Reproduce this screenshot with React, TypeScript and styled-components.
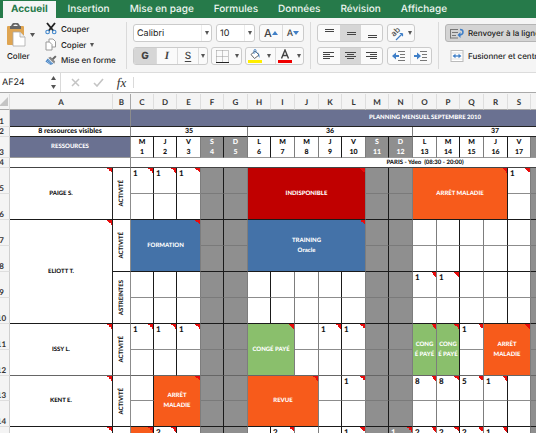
import React from 'react';
import styled, { createGlobalStyle, css } from 'styled-components';

const GlobalStyle = createGlobalStyle`
  *, *::before, *::after { box-sizing: border-box; }
  body { margin: 0; background: #fff; text-rendering: geometricPrecision; }
  button, input, select { font: inherit; color: inherit; margin: 0; padding: 0; border: 0; background: none; text-rendering: inherit; }
`;

const UI_FONT = 'Inter, "Liberation Sans", sans-serif';
const SHEET_FONT = 'Lato, "Open Sans", sans-serif';

const colors = {
  green: '#267a4a',
  ribbon: '#f5f5f5',
  slate: '#6a7191',
  weekend: '#8f8f8f',
  red: '#c00000',
  orange: '#f75b1b',
  blue: '#4472a8',
  leaf: '#8abf6c',
};

const Page = styled.div`
  display: flex;
  flex-direction: column;
  height: 100vh;
  overflow: hidden;
  font-family: ${UI_FONT};
  font-size: 10px;
  color: #1c1c1c;
`;

/* ---------- Tabs ---------- */

const TabBar = styled.nav`
  display: flex;
  flex: none;
  height: 18px;
  padding: 1px 0 0 3px;
  background: ${colors.green};
`;

const Tab = styled.button<{ $active?: boolean }>`
  flex: none;
  padding: 0 10px;
  line-height: 17px;
  font-size: 10px;
  font-weight: 500;
  white-space: nowrap;
  color: #eef6f1;
  ${(p) =>
    p.$active &&
    css`
      padding: 0 8px;
      margin-right: 2px;
      color: ${colors.green};
      font-weight: 700;
      background: ${colors.ribbon};
    `}
`;

/* ---------- Ribbon ---------- */

const Ribbon = styled.div`
  display: flex;
  flex: none;
  height: 55px;
  padding: 4px 0 3px 6px;
  background: ${colors.ribbon};
  border-bottom: 1px solid #dcdcdc;
  overflow: hidden;
`;

const Divider = styled.div`
  flex: none;
  width: 1px;
  margin: 0 6px;
  background: #dadada;
`;

const PasteButton = styled.button`
  display: grid;
  grid-template-columns: 24px 8px;
  grid-template-rows: 26px 16px;
  align-items: center;
  flex: none;
  width: 36px;
  height: 44px;
`;

const PasteLabel = styled.span`
  grid-column: 1 / -1;
  text-align: left;
  padding-left: 1px;
  font-size: 8px;
  font-weight: 500;
`;

const ClipList = styled.div`
  display: flex;
  flex-direction: column;
  flex: none;
  width: 75px;
  margin-left: 3px;
`;

const ClipButton = styled.button`
  display: flex;
  align-items: center;
  gap: 4px;
  height: 17px;
  margin-top: -1px;
  margin-bottom: 1px;
  font-size: 8px;
  font-weight: 500;
  white-space: nowrap;
`;

const ToolStack = styled.div`
  display: flex;
  flex-direction: column;
  flex: none;
  gap: 5px;
  padding-top: 2px;
`;

const ToolRow = styled.div<{ $gap?: number }>`
  display: flex;
  gap: ${(p) => p.$gap ?? 4}px;
  height: 18px;
`;

const frame = css`
  border: 1px solid #cbcbcb;
  border-radius: 3px;
  overflow: hidden;
`;

const ButtonGroup = styled.div`
  ${frame}
  display: flex;
  flex: none;
  background: #fafafa;
`;

const ToolButton = styled.button<{ $w?: number; $on?: boolean; $line?: boolean }>`
  display: flex;
  align-items: center;
  justify-content: center;
  width: ${(p) => p.$w ?? 21}px;
  height: 16px;
  font-size: 11px;
  color: #444;
  background: ${(p) => (p.$on ? '#d6d6d6' : 'transparent')};
  border-left: ${(p) => (p.$line ? '1px solid #dcdcdc' : '0')};
`;

const Picker = styled.div<{ $w: number }>`
  ${frame}
  position: relative;
  flex: none;
  width: ${(p) => p.$w}px;
  background: #fff;

  select {
    display: block;
    width: 100%;
    height: 16px;
    padding-left: 3px;
    font-size: 9px;
    appearance: none;
  }
  span {
    position: absolute;
    top: 0;
    right: 0;
    display: flex;
    align-items: center;
    justify-content: center;
    width: 10px;
    height: 16px;
    border-left: 1px solid #ececec;
    pointer-events: none;
  }
`;

const WideButton = styled.button<{ $on?: boolean }>`
  display: flex;
  align-items: center;
  gap: 4px;
  height: 18px;
  width: 120px;
  padding-left: 4px;
  font-size: 8px;
  font-weight: 500;
  white-space: nowrap;
  border: 1px solid ${(p) => (p.$on ? '#b5b5b5' : 'transparent')};
  border-radius: 3px;
  background: ${(p) => (p.$on ? '#d4d4d4' : 'transparent')};
`;

/* ---------- Formula bar ---------- */

const FormulaBar = styled.div`
  display: flex;
  align-items: center;
  flex: none;
  height: 20px;
  background: #fff;
  border-bottom: 1px solid #a9a9a9;
`;

const NameBox = styled.input`
  width: 48px;
  height: 18px;
  padding-left: 2px;
  font-size: 9px;
`;

const Stepper = styled.div`
  display: flex;
  flex-direction: column;
  width: 12px;
  height: 19px;
  padding-right: 1px;
  button {
    display: flex;
    flex: 1;
    align-items: center;
    justify-content: center;
  }
`;

const BarActions = styled.div`
  display: flex;
  padding-left: 3px;
`;

const BarButton = styled.button`
  display: flex;
  align-items: center;
  justify-content: center;
  width: 23px;
  height: 18px;
`;

const FxButton = styled(BarButton)`
  font-family: "Liberation Serif", serif;
  font-size: 13px;
  font-style: italic;
  color: #333;
`;

const BarLine = styled.div<{ $h: number }>`
  width: 1px;
  height: ${(p) => p.$h}px;
  background: #dadada;
`;

const FormulaInput = styled.input`
  flex: 1;
  height: 18px;
  padding: 0 4px;
`;

/* ---------- Sheet ---------- */

const SheetView = styled.div`
  flex: 1;
  min-height: 0;
  overflow: hidden;
  padding-top: 1px;
  background: #f4f4f4;
`;

const Sheet = styled.table`
  table-layout: fixed;
  width: 0;
  margin-left: -6px;
  border-collapse: separate;
  border-spacing: 0;
  background: #fff;
  font-family: ${SHEET_FONT};
  font-size: 6px;
  font-weight: 900;
  line-height: 10px;
  color: #111;

  td, th { padding: 0; overflow: hidden; }
`;

const Row = styled.tr<{ $h: number }>`
  height: ${(p) => p.$h}px;
`;

const ColumnHead = styled.th<{ $line?: string }>`
  font-size: 8px;
  font-weight: 700;
  color: #333;
  background: #f4f4f4;
  border-right: 1px solid ${(p) => p.$line ?? '#dedede'};
  border-bottom: 1px solid #a8a8a8;
`;

const Corner = styled.th`
  background: #f4f4f4;
  border-right: 1px solid #dedede;
  border-bottom: 1px solid #a8a8a8;
  svg { display: block; margin-left: 5px; }
`;

const RowHead = styled.th`
  font-size: 8px;
  font-weight: 700;
  line-height: 9px;
  vertical-align: bottom;
  color: #333;
  background: #f4f4f4;
  border-right: 1px solid #cfcfcf;
  border-bottom: 1px solid #dedede;
`;

const noteMark = css`
  background-image: linear-gradient(to top right, transparent 50%, #e80c0c 50%);
  background-size: 5px 5px;
  background-position: top right;
  background-repeat: no-repeat;
`;

interface CellStyle {
  $bg?: string;
  $fg?: string;
  $right?: string;
  $bottom?: string;
  $note?: boolean;
}

const Cell = styled.td<CellStyle>`
  text-align: center;
  vertical-align: middle;
  white-space: nowrap;
  color: ${(p) => p.$fg ?? '#111'};
  background-color: ${(p) => p.$bg ?? '#fff'};
  border-right: 1px solid ${(p) => p.$right ?? '#222'};
  border-bottom: 1px solid ${(p) => p.$bottom ?? '#222'};
  ${(p) => p.$note && noteMark}
`;

const HeadingCell = styled(Cell)`
  font-size: 7px;
`;

const SlotCell = styled(Cell)`
  && { padding-left: 2px; }
  text-align: left;
  vertical-align: top;
  font-size: 8px;
  line-height: 11px;
`;

const Upright = styled.span`
  display: inline-block;
  writing-mode: vertical-rl;
  transform: rotate(180deg);
  white-space: nowrap;
  vertical-align: middle;
`;

const Tight = styled.div`
  line-height: 9px;
`;

/* ---------- Icons ---------- */

const Arrow = ({ up, color = '#555', w = 5 }: { up?: boolean; color?: string; w?: number }) => (
  <svg width={w} height="4" viewBox="0 0 6 4" preserveAspectRatio="none" aria-hidden="true">
    <path d={up ? 'M0 4L3 0L6 4Z' : 'M0 0L3 4L6 0Z'} fill={color} />
  </svg>
);

const PasteIcon = () => (
  <svg width="20" height="24" viewBox="0 0 20 24" aria-hidden="true">
    <rect x="1" y="3" width="17" height="19" rx="1" fill="#dfa552" />
    <path d="M4 3h11v3H4z" fill="#666" />
    <path d="M6 4a3.5 3.5 0 0 1 7 0" fill="none" stroke="#666" strokeWidth="2" />
    <path d="M7 9h7l5 5v9H7z" fill="#fff" stroke="#aaa" strokeWidth=".8" />
    <path d="M14 9v5h5" fill="#eee" stroke="#aaa" strokeWidth=".8" />
  </svg>
);

const ScissorsIcon = () => (
  <svg width="12" height="13" viewBox="0 0 12 13" aria-hidden="true">
    <path d="M2 1L8.5 9M10 1L3.5 9" stroke="#222" strokeWidth="1.9" />
    <circle cx="2.6" cy="10" r="1.8" fill="none" stroke="#3f86cc" strokeWidth="1.1" />
    <circle cx="9.2" cy="10" r="1.8" fill="none" stroke="#3f86cc" strokeWidth="1.1" />
  </svg>
);

const CopyIcon = () => (
  <svg width="12" height="13" viewBox="0 0 12 13" aria-hidden="true">
    <path d="M4 1h4l2.5 2.5V9H4z" fill="#fff" stroke="#999" />
    <path d="M1 4h3.5L7 6.500V12H1z" fill="#fff" stroke="#999" />
  </svg>
);

const BrushIcon = () => (
  <svg width="12" height="12" viewBox="0 0 13 12" aria-hidden="true">
    <path d="M7 5L11 1l1.500 1.500L8.500 6.500z" fill="#666" />
    <path d="M3.500 3.500L6 2.500l5 5-1 2.500z" fill="#8a8a8a" />
    <path d="M3 4.500L9 10 6 11.500 .5 7.500z" fill="#4a86c5" />
    <path d="M2 7l4 3.500M3.500 6L7.500 9.500" stroke="#d4e4f4" strokeWidth=".6" />
  </svg>
);

const BordersIcon = () => (
  <svg width="13" height="13" viewBox="0 0 13 13" aria-hidden="true">
    <path d="M.5 .5h12M.5 .5v12M12.500 .5v12M6.500 .5v12M.5 6.500h12" stroke="#999" strokeDasharray="1 1" fill="none" />
    <path d="M0 12.500h13" stroke="#222" />
  </svg>
);

const FillIcon = () => (
  <svg width="14" height="14" viewBox="0 0 14 14" aria-hidden="true">
    <path d="M3 5.500L7 2l4 4-4.500 3.500z" fill="#fff" stroke="#666" />
    <path d="M6 5V1.500a1 1 0 0 1 2 0V4" fill="none" stroke="#4a86c5" />
    <path d="M9 3q3 1 2.500 6Q9.500 7 10.500 5z" fill="#4a86c5" />
    <rect y="11" width="14" height="3" fill="#ffee00" />
  </svg>
);

const FontColorIcon = () => (
  <svg width="14" height="14" viewBox="0 0 14 14" aria-hidden="true">
    <path d="M3.500 9.500L7 1l3.500 8.500M4.700 6.500h4.600" fill="none" stroke="#444" strokeWidth="1.400" />
    <rect y="11" width="14" height="3" fill="#f00000" />
  </svg>
);

const LinesIcon = ({ lines }: { lines: [number, number, number][] }) => (
  <svg width="12" height="12" viewBox="0 0 12 12" aria-hidden="true">
    {lines.map(([x, y, w]) => (
      <rect key={y} x={x} y={y} width={w} height="1" fill="#444" />
    ))}
  </svg>
);

const IndentIcon = ({ inward }: { inward?: boolean }) => (
  <svg width="14" height="10" viewBox="0 0 14 10" aria-hidden="true">
    <path d="M6 .5h7M8 3.500h5M8 6.500h5M6 9.500h7" stroke="#777" />
    <path d={inward ? 'M0 4h3V1.500L7 5 3 8.500V6H0z' : 'M7 4H4V1.500L0 5l4 3.500V6h3z'} fill="#3f7fc8" />
  </svg>
);

const OrientationIcon = () => (
  <svg width="15" height="15" viewBox="0 0 15 15" aria-hidden="true">
    <text x="0" y="0" fontSize="8" fontWeight="500" fontFamily="Inter" fill="#444" transform="translate(5 11) rotate(-45)">ab</text>
    <path d="M7 14L13 8M13.500 7.500v2.800M13.500 7.500h-2.800" stroke="#3f7fc8" fill="none" strokeWidth="1.200" />
  </svg>
);

const WrapIcon = () => (
  <svg width="14" height="11" viewBox="0 0 14 11" aria-hidden="true">
    <path d="M.5 1v9.500M.5 1.500H8M2 4.500h6M2 7.500h4M.5 10H8" stroke="#777" fill="none" />
    <path d="M10 1.500q3 0 3 2.500t-3 3" stroke="#3f7fc8" strokeWidth="1.500" fill="none" />
    <path d="M10.500 4v6L7.500 7z" fill="#3f7fc8" />
  </svg>
);

const MergeIcon = () => (
  <svg width="14" height="12" viewBox="0 0 14 12" aria-hidden="true">
    <rect x="1" y=".5" width="12" height="11" fill="#fff" stroke="#bbb" />
    <path d="M1 3h12M1 9h12" stroke="#ccc" strokeWidth=".6" />
    <path d="M5 6h4" stroke="#3f7fc8" strokeWidth="1.300" />
    <path d="M2.500 6L5.500 3.800v4.400zM11.500 6L8.500 3.800v4.400z" fill="#3f7fc8" />
  </svg>
);

/* ---------- Data ---------- */

const BLACK = '#1a1a1a';
const GREY = '#7d7d7d';

const letters = [
  'C', 'D', 'E', 'F', 'G', 'H', 'I', 'J', 'K', 'L', 'M', 'N', 'O',
  'P', 'Q', 'R', 'S', 'T', 'U', 'V', 'W', 'X', 'Y', 'Z', 'AA',
];
const widths = [23, 23, 24, 23, 24, 23, 24, 24, 23, 24, 23, 24, 24, 23, 24, 24, 23, 24, 23, 24, 24, 23, 24, 23, 24];
const darkLines = new Set([0, 1, 3, 5, 8, 10, 13, 15]);
const initials = ['L', 'M', 'M', 'J', 'V', 'S', 'D'];

const columns = letters.map((letter, i) => {
  const weekday = (i + 2) % 7;
  return {
    letter,
    width: widths[i],
    day: i + 1,
    initial: initials[weekday],
    weekend: weekday > 4,
    line: darkLines.has(i) ? BLACK : GREY,
  };
});

const weeks = [
  { n: 35, span: 5 },
  { n: 36, span: 7 },
  { n: 37, span: 7 },
  { n: 38, span: 6 },
];

interface Entry {
  at: string;
  value?: string;
  block?: { lines: string[]; span: number; color: string };
}

interface Track {
  label: string;
  entries: Entry[];
  heights: [number, number];
  bottom?: string;
}

const count = (at: string, value = '1'): Entry => ({ at, value });
const block = (at: string, span: number, color: string, ...lines: string[]): Entry => ({
  at,
  block: { lines, span, color },
});

const people: { name: string; tracks: Track[] }[] = [
  {
    name: 'PAIGE S.',
    tracks: [
      {
        label: 'ACTIVITÉ',
        heights: [26, 26],
        entries: [
          count('C'), count('D'), count('E'),
          block('H', 5, colors.red, 'INDISPONIBLE'),
          block('O', 4, colors.orange, 'ARRÊT MALADIE'),
          count('S'),
        ],
      },
    ],
  },
  {
    name: 'ELIOTT T.',
    tracks: [
      {
        label: 'ACTIVITÉ',
        heights: [26, 26],
        entries: [
          block('C', 3, colors.blue, 'FORMATION'),
          block('H', 5, colors.blue, 'TRAINING', 'Oracle'),
        ],
      },
      { label: 'ASTREINTES', heights: [26, 26], entries: [count('O'), count('P')] },
    ],
  },
  {
    name: 'ISSY L.',
    tracks: [
      {
        label: 'ACTIVITÉ',
        heights: [26, 26],
        bottom: '#666',
        entries: [
          count('C'), count('D'), count('E'),
          block('H', 2, colors.leaf, 'CONGÉ PAYÉ'),
          count('K'), count('L'),
          block('O', 1, colors.leaf, 'CONG', 'É PAYÉ'),
          block('P', 1, colors.leaf, 'CONG', 'É PAYÉ'),
          count('Q'),
          block('R', 2, colors.orange, 'ARRÊT', 'MALADIE'),
        ],
      },
    ],
  },
  {
    name: 'KENT E.',
    tracks: [
      {
        label: 'ACTIVITÉ',
        heights: [25, 26],
        entries: [
          block('D', 2, colors.orange, 'ARRÊT', 'MALADIE'),
          block('H', 3, colors.orange, 'REVUE'),
          count('L'), count('O', '8'), count('P', '8'), count('Q', '5'), count('R'),
        ],
      },
    ],
  },
  {
    name: '',
    tracks: [
      {
        label: '',
        heights: [26, 26],
        entries: [
          block('C', 1, colors.orange, ''),
          count('D', '2'), count('I', '2'), count('L'), count('N'),
          count('O', '2'), count('P', '2'), count('Q', '2'), count('R'),
        ],
      },
    ],
  },
];

/* ---------- Components ---------- */

interface TrackRowsProps {
  track: Track;
  number: number;
  name?: string;
  nameSpan: number;
}

const TrackRows = ({ track, number, name, nameSpan }: TrackRowsProps) => {
  const bottom = track.bottom ?? BLACK;
  const upper: React.ReactNode[] = [];
  const lower: React.ReactNode[] = [];
  for (let i = 0; i < columns.length; i += 1) {
    const col = columns[i];
    const entry = track.entries.find((e) => e.at === col.letter);
    if (entry?.block) {
      const { lines, span, color } = entry.block;
      upper.push(
        <Cell key={col.letter} colSpan={span} rowSpan={2} $bg={color} $fg="#fff" $note $right={columns[i + span - 1].line} $bottom={bottom}>
          {lines.map((line) => (
            <div key={line}>{line}</div>
          ))}
        </Cell>,
      );
      i += span - 1;
    } else {
      const bg = col.weekend ? colors.weekend : undefined;
      upper.push(
        <SlotCell key={col.letter} $bg={bg} $fg={col.weekend ? '#fff' : undefined} $note={!!entry} $right={col.line} $bottom={col.weekend ? '#7a7a7a' : '#8c8c8c'}>
          {entry?.value}
        </SlotCell>,
      );
      lower.push(<SlotCell key={col.letter} $bg={bg} $right={col.line} $bottom={bottom} />);
    }
  }
  return (
    <>
      <Row $h={track.heights[0]}>
        <RowHead scope="row">{number}</RowHead>
        {name !== undefined && (
          <Cell rowSpan={nameSpan} $note $bottom={bottom}>{name}</Cell>
        )}
        <Cell rowSpan={2} $right="#8c8c8c" $bottom={bottom}>
          <Upright>{track.label}</Upright>
        </Cell>
        {upper}
      </Row>
      <Row $h={track.heights[1]}>
        <RowHead scope="row">{number + 1}</RowHead>
        {lower}
      </Row>
    </>
  );
};

const Planning = () => {
  let next = 5;
  return (
    <Sheet>
      <colgroup>
        <col width={16} />
        <col width={103} />
        <col width={18} />
        {columns.map((c) => (
          <col key={c.letter} width={c.width} />
        ))}
      </colgroup>
      <thead>
        <Row $h={16}>
          <Corner aria-label="Tout sélectionner">
            <svg width="9" height="9" viewBox="0 0 9 9" aria-hidden="true"><path d="M9 0v9H0z" fill="#c4c4c4" /></svg>
          </Corner>
          <ColumnHead scope="col">A</ColumnHead>
          <ColumnHead scope="col" $line="#a8a8a8">B</ColumnHead>
          {columns.map((c) => (
            <ColumnHead key={c.letter} scope="col">{c.letter}</ColumnHead>
          ))}
        </Row>
      </thead>
      <tbody>
        <Row $h={17}>
          <RowHead scope="row">1</RowHead>
          <Cell colSpan={2} $bg={colors.slate} $right="#8c8c8c" />
          <Cell colSpan={25} $bg={colors.slate} $fg="#fff">PLANNING MENSUEL SEPTEMBRE 2010</Cell>
        </Row>
        <Row $h={10}>
          <RowHead scope="row">2</RowHead>
          <HeadingCell colSpan={2} $right="#8c8c8c"><Tight>8 ressources visibles</Tight></HeadingCell>
          {weeks.map((w) => (
            <HeadingCell key={w.n} colSpan={w.span} $right={GREY}><Tight>{w.n}</Tight></HeadingCell>
          ))}
        </Row>
        <Row $h={21}>
          <RowHead scope="row">3</RowHead>
          <Cell colSpan={2} $bg={colors.slate} $fg="#fff" $right="#8c8c8c" $bottom="#999">RESSOURCES</Cell>
          {columns.map((c) => (
            <HeadingCell key={c.letter} $bg={c.weekend ? colors.weekend : undefined} $fg={c.weekend ? '#fff' : undefined} $right={c.line} $bottom="#999">
              <div>{c.initial}</div>
              <div>{c.day}</div>
            </HeadingCell>
          ))}
        </Row>
        <Row $h={10}>
          <RowHead scope="row">4</RowHead>
          <Cell colSpan={2} $right="#8c8c8c" $bottom="#444" />
          <Cell colSpan={25} $bottom="#444"><Tight>PARIS - Ydeo&nbsp; (08:30 - 20:00)</Tight></Cell>
        </Row>
        {people.map((person) =>
          person.tracks.map((track, i) => {
            const number = next;
            next += 2;
            return (
              <TrackRows
                key={number}
                track={track}
                number={number}
                name={i === 0 ? person.name : undefined}
                nameSpan={person.tracks.length * 2}
              />
            );
          }),
        )}
      </tbody>
    </Sheet>
  );
};

const Glyph = styled.span<{ $size?: number; $weight?: number; $italic?: boolean; $underline?: boolean; $serif?: boolean }>`
  font-family: ${(p) => (p.$serif ? '"Liberation Serif", serif' : UI_FONT)};
  font-size: ${(p) => p.$size ?? 10}px;
  font-weight: ${(p) => p.$weight ?? 500};
  font-style: ${(p) => (p.$italic ? 'italic' : 'normal')};
  text-decoration: ${(p) => (p.$underline ? 'underline' : 'none')};
  text-underline-offset: 2px;
`;

const tabs = ['Accueil', 'Insertion', 'Mise en page', 'Formules', 'Données', 'Révision', 'Affichage'];

export default function App() {
  return (
    <Page>
      <GlobalStyle />
      <TabBar>
        {tabs.map((t, i) => (
          <Tab key={t} $active={i === 0}>{t}</Tab>
        ))}
      </TabBar>

      <Ribbon>
        <PasteButton>
          <PasteIcon />
          <Arrow />
          <PasteLabel>Coller</PasteLabel>
        </PasteButton>
        <ClipList>
          <ClipButton><ScissorsIcon />Couper</ClipButton>
          <ClipButton><CopyIcon />Copier<Arrow w={4} /></ClipButton>
          <ClipButton><BrushIcon />Mise en forme</ClipButton>
        </ClipList>
        <Divider />

        <ToolStack>
          <ToolRow>
            <Picker $w={79}>
              <select aria-label="Police" defaultValue="Calibri"><option>Calibri</option></select>
              <span><Arrow w={4} /></span>
            </Picker>
            <Picker $w={39}>
              <select aria-label="Taille de police" defaultValue="10"><option>10</option></select>
              <span><Arrow w={4} /></span>
            </Picker>
            <ButtonGroup>
              <ToolButton $w={22} aria-label="Agrandir la police"><Glyph $size={11}>A</Glyph><Arrow up color="#3f7fc8" w={6} /></ToolButton>
              <ToolButton $line aria-label="Réduire la police"><Glyph $size={9}>A</Glyph><Arrow color="#3f7fc8" w={6} /></ToolButton>
            </ButtonGroup>
          </ToolRow>
          <ToolRow $gap={3}>
            <ButtonGroup>
              <ToolButton $w={22} $on aria-label="Gras"><Glyph $weight={800}>G</Glyph></ToolButton>
              <ToolButton $line aria-label="Italique"><Glyph $serif $italic $weight={700} $size={11}>I</Glyph></ToolButton>
              <ToolButton $line aria-label="Souligné"><Glyph $underline>S</Glyph></ToolButton>
              <ToolButton $line $w={9} aria-label="Options de soulignement"><Arrow w={4} /></ToolButton>
            </ButtonGroup>
            <ButtonGroup>
              <ToolButton $w={20} aria-label="Bordures"><BordersIcon /></ToolButton>
              <ToolButton $w={9} aria-label="Options de bordure"><Arrow w={4} /></ToolButton>
            </ButtonGroup>
            <ButtonGroup>
              <ToolButton $w={17} aria-label="Couleur de remplissage"><FillIcon /></ToolButton>
              <ToolButton $w={12} aria-label="Choisir le remplissage"><Arrow w={4} /></ToolButton>
              <ToolButton $w={19} $line aria-label="Couleur de police"><FontColorIcon /></ToolButton>
              <ToolButton $w={9} aria-label="Choisir la couleur"><Arrow w={4} /></ToolButton>
            </ButtonGroup>
          </ToolRow>
        </ToolStack>
        <Divider />

        <ToolStack>
          <ToolRow>
            <ButtonGroup>
              <ToolButton $w={22} aria-label="Aligner en haut"><LinesIcon lines={[[2, 2, 9], [2, 4, 9]]} /></ToolButton>
              <ToolButton $on aria-label="Aligner au milieu"><LinesIcon lines={[[2, 5, 9], [2, 7, 9]]} /></ToolButton>
              <ToolButton aria-label="Aligner en bas"><LinesIcon lines={[[2, 8, 9], [2, 10, 9]]} /></ToolButton>
            </ButtonGroup>
            <ButtonGroup>
              <ToolButton $w={17} aria-label="Orientation"><OrientationIcon /></ToolButton>
              <ToolButton $w={9} aria-label="Options d’orientation"><Arrow w={4} /></ToolButton>
            </ButtonGroup>
          </ToolRow>
          <ToolRow>
            <ButtonGroup>
              <ToolButton $w={22} aria-label="Aligner à gauche"><LinesIcon lines={[[0, 2, 11], [0, 4, 7], [0, 6, 11], [0, 8, 7]]} /></ToolButton>
              <ToolButton $on aria-label="Centrer"><LinesIcon lines={[[0, 2, 11], [2, 4, 7], [0, 6, 11], [2, 8, 7]]} /></ToolButton>
              <ToolButton aria-label="Aligner à droite"><LinesIcon lines={[[0, 2, 11], [4, 4, 7], [0, 6, 11], [4, 8, 7]]} /></ToolButton>
            </ButtonGroup>
            <ButtonGroup>
              <ToolButton $w={22} aria-label="Diminuer le retrait"><IndentIcon /></ToolButton>
              <ToolButton $line aria-label="Augmenter le retrait"><IndentIcon inward /></ToolButton>
            </ButtonGroup>
          </ToolRow>
        </ToolStack>
        <Divider />

        <ToolStack>
          <WideButton $on><WrapIcon />Renvoyer à la ligne</WideButton>
          <WideButton><MergeIcon />Fusionner et centrer</WideButton>
        </ToolStack>
      </Ribbon>

      <FormulaBar>
        <NameBox aria-label="Zone de nom" defaultValue="AF24" />
        <Stepper>
          <button aria-label="Précédent"><Arrow up /></button>
          <button aria-label="Suivant"><Arrow /></button>
        </Stepper>
        <BarLine $h={19} />
        <BarActions>
          <BarButton aria-label="Annuler">
            <svg width="9" height="9" viewBox="0 0 9 9" aria-hidden="true"><path d="M1 1l7 7M8 1L1 8" stroke="#c4c4c4" strokeWidth="1.500" /></svg>
          </BarButton>
          <BarButton aria-label="Valider">
            <svg width="11" height="9" viewBox="0 0 11 9" aria-hidden="true"><path d="M1 5l3 3 6-7" fill="none" stroke="#c4c4c4" strokeWidth="1.600" /></svg>
          </BarButton>
          <FxButton aria-label="Insérer une fonction">fx</FxButton>
        </BarActions>
        <BarLine $h={11} />
        <FormulaInput aria-label="Barre de formule" />
      </FormulaBar>

      <SheetView>
        <Planning />
      </SheetView>
    </Page>
  );
}
